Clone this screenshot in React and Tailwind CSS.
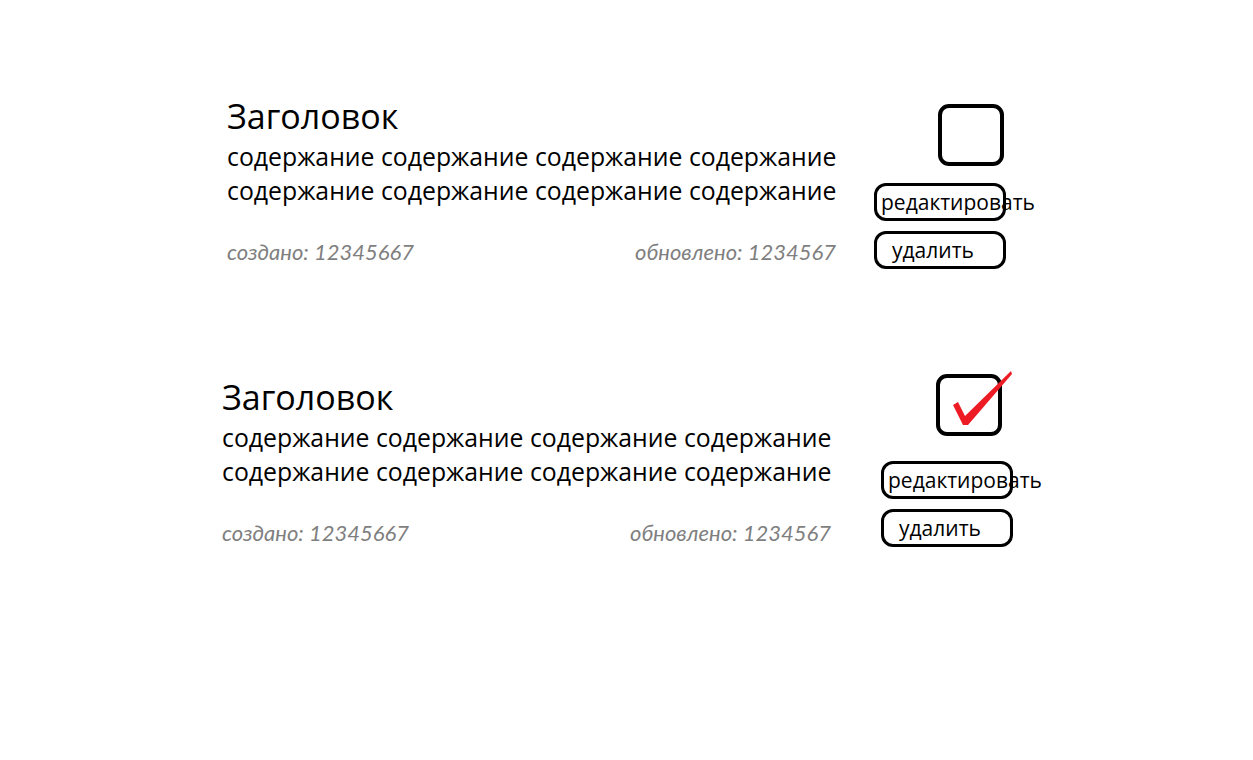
import React from "react";

const body = "содержание содержание содержание содержание";

const Checkmark = () => (
  <svg
    className="absolute left-0 top-0 overflow-visible"
    width="66"
    height="62"
    viewBox="0 0 66 62"
  >
    <polygon
      points="13,27 18,24 25,38 71,-7 72,-4 28,47 23,47"
      fill="#ed1c24"
    />
  </svg>
);

const Card = ({ checked, className, sideGap, boxOffset, boxTop, editGap }) => {
  return (
    <div className={`flex items-start ${className}`}>
      {/* Text column */}
      <div className="w-[609px]">
        <h2 className="text-[34px] leading-[40px] text-black font-['Open_Sans',sans-serif]">
          Заголовок
        </h2>
        <p className="mt-[3px] text-[24.8px] leading-[34px] text-black font-['Open_Sans',sans-serif] whitespace-nowrap">
          {body}
          <br />
          {body}
        </p>
        <div className="mt-[31px] flex justify-between text-[22px] leading-[28px] italic text-[#7f7f7f] font-['Lato',sans-serif]">
          <span>создано: 12345667</span>
          <span>обновлено: 1234567</span>
        </div>
      </div>

      {/* Controls */}
      <div className={`flex flex-col ${sideGap}`}>
        <div
          className={`relative w-[66px] h-[62px] border-[4px] border-black rounded-[11px] ${boxOffset} ${boxTop}`}
        >
          {checked && <Checkmark />}
        </div>
        <button
          className={`${editGap} w-[132px] h-[38px] border-[3px] border-black rounded-[12px] pl-[4px] text-left text-[21px] leading-none whitespace-nowrap text-black font-['Open_Sans',sans-serif]`}
        >
          редактировать
        </button>
        <button className="mt-[10px] w-[132px] h-[38px] border-[3px] border-black rounded-[12px] pl-[15px] text-left text-[21px] leading-none text-black font-['Open_Sans',sans-serif]">
          удалить
        </button>
      </div>
    </div>
  );
};

export default function App() {
  return (
    <div className="w-[1253px] h-[760px] bg-white overflow-hidden">
      <Card
        className="ml-[227px] pt-[96px]"
        sideGap="ml-[38px]"
        boxOffset="ml-[64px]"
        boxTop="mt-[8px]"
        editGap="mt-[17px]"
      />
      <Card
        checked
        className="ml-[222px] mt-[108px]"
        sideGap="ml-[50px]"
        boxOffset="ml-[55px]"
        boxTop="-mt-[3px]"
        editGap="mt-[25px]"
      />
    </div>
  );
}
